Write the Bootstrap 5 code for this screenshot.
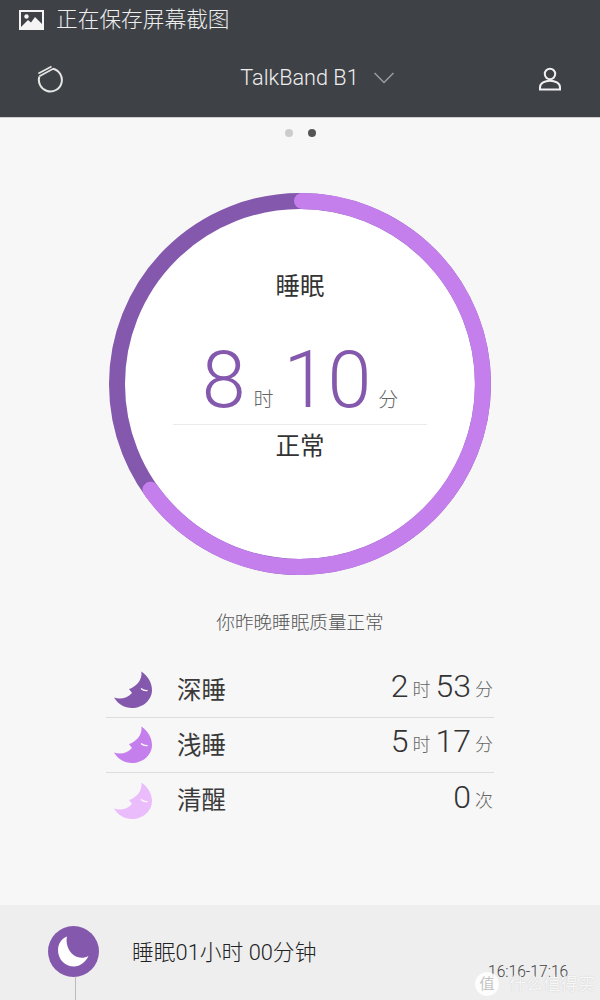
<!DOCTYPE html>
<html lang="zh-CN">
<head>
<meta charset="UTF-8">
<meta name="viewport" content="width=device-width, initial-scale=1.0">
<title>TalkBand B1</title>
<link rel="stylesheet" href="https://cdn.jsdelivr.net/npm/bootstrap@5.3.0/dist/css/bootstrap.min.css" />
<script src="https://cdn.jsdelivr.net/npm/bootstrap@5.3.0/dist/js/bootstrap.bundle.min.js"></script>
<style>
html, body { height: 1000px; overflow: hidden; }
body { font-family: Roboto, "Noto Sans CJK SC", sans-serif; background: #f7f7f7; color: #333; }
.screen { width: 600px; height: 1000px; position: relative; overflow: hidden; }
.top-head { height: 118px; background: #3e4146; border-bottom: 1px solid #cfcfcf; color: #eee; }
.status-line { height: 40px; padding-left: 19px; gap: 12px; font-size: 21.7px; font-weight: 300; }
.nav-line { height: 77px; padding: 0 36px 0 36px; }
.band-title { font-size: 21.7px; font-weight: 300; gap: 15px; margin-left: 34px; }
.pager { height: 75px; padding-top: 11px; gap: 15px; }
.pager-dot { width: 8px; height: 8px; border-radius: 50%; background: #ccc; }
.pager-dot.on { background: #555; }
.ring-box { width: 382px; height: 382px; position: relative; }
.ring-text { position: absolute; inset: 0; }
.ring-name { position: absolute; top: 78px; width: 100%; text-align: center; font-size: 24.5px; line-height: 32px; font-weight: 400; }
.ring-time { position: absolute; top: 136px; left: 64px; width: 254px; height: 96px; border-bottom: 1px solid #eaeaea; padding-bottom: 11px; }
.big-num { font-size: 79px; line-height: 66px; font-weight: 300; color: #8459ad; }
.big-unit { font-size: 20px; line-height: 26px; color: #666; font-weight: 300; margin-left: 8px; }
.big-unit.wide { margin-right: 10px; }
.big-unit.tight { margin-left: 7px; }
.ring-state { position: absolute; top: 237px; width: 100%; text-align: center; font-size: 24.5px; line-height: 34px; font-weight: 400; }
.verdict { margin-top: 34px; text-align: center; font-size: 18.6px; line-height: 28px; color: #555; font-weight: 300; }
.stage-list { width: 388px; margin: 26px auto 0; }
.stage-row { height: 55px; border-bottom: 1px solid #ddd; padding-right: 1px; }
.stage-row:last-child { border-bottom: 0; }
.stage-name { font-size: 24.5px; font-weight: 400; color: #3a3a3a; margin: 2px 0 0 24px; }
.stage-moon { margin-left: 7px; }
.stage-num { font-size: 32px; font-weight: 300; line-height: 40px; color: #333; margin-bottom: 8px; }
.stage-unit { font-size: 18px; font-weight: 300; color: #666; margin-left: 4px; line-height: 30px; }
.stage-gap { width: 5px; }
.day-foot { position: absolute; left: 0; right: 0; bottom: 0; height: 95px; background: #eee; }
.foot-line { position: absolute; left: 75px; top: 72px; width: 1px; height: 30px; background: #bbb; }
.foot-moon { position: absolute; left: 48px; top: 21px; }
.foot-text { position: absolute; left: 132px; top: 32px; font-size: 21.8px; line-height: 32px; font-weight: 300; color: #222; }
.foot-time { position: absolute; left: 488px; top: 57px; font-size: 15.6px; line-height: 20px; font-weight: 300; color: #444; }
.water-mark { position: absolute; left: 475px; top: 67px; gap: 10px; color: rgba(255,255,255,.9); font-size: 17.2px; line-height: 24px; font-weight: 400; white-space: nowrap; text-shadow: 0 0 1px #bbb; }
.water-ico { width: 24px; height: 24px; border-radius: 50%; background: rgba(255,255,255,.85); color: #c4c4c4; font-size: 15px; line-height: 24px; text-align: center; text-shadow: none; }
</style>
</head>
<body>
<div class="screen d-flex flex-column">
    <div class="top-head">
        <div class="status-line d-flex align-items-center">
            <svg width="25" height="20" viewBox="0 0 25 20"><rect x="0" y="0" width="25" height="20" fill="#f4f4f4"/><rect x="2" y="2" width="21" height="16" fill="#3e4146"/><circle cx="7.5" cy="6.5" r="2.2" fill="#f4f4f4"/><path d="M1 18 L9 10 L12 12.5 L16 7 L24 15 L24 18 Z" fill="#f4f4f4"/></svg>
            <span>正在保存屏幕截图</span>
        </div>
        <div class="nav-line d-flex align-items-center justify-content-between">
            <svg width="28" height="28" viewBox="0 0 28 28" fill="none" stroke="#e6e6e6" stroke-width="2"><path d="M17 3.8 A11.5 11.5 0 1 1 3.4 11.5"/><path stroke-width="1.7" d="M3.4 11.2 L17.2 3.8 M2.4 8.4 L15.5 1.4"/></svg>
            <div class="band-title d-flex align-items-center">
                <span>TalkBand B1</span>
                <svg width="20" height="12" viewBox="0 0 20 12" fill="none" stroke="#9a9da1" stroke-width="1.5"><path d="M0.5 1 L10 10.5 L19.5 1"/></svg>
            </div>
            <svg width="28" height="28" viewBox="0 0 28 28" fill="none" stroke="#f0f0f0" stroke-width="2"><circle cx="14" cy="9" r="5.2"/><path d="M4 24.5 V22.5 C4 18 9 15.8 14 15.8 C19 15.8 24 18 24 22.5 V24.5 Z"/></svg>
        </div>
    </div>

    <div class="pager d-flex justify-content-center">
        <span class="pager-dot"></span>
        <span class="pager-dot on"></span>
    </div>

    <div class="ring-box mx-auto">
        <svg width="382" height="382" viewBox="0 0 382 382">
            <circle cx="191" cy="191" r="190.5" fill="#ccc"/>
            <circle cx="191" cy="191" r="183" fill="#fff" stroke="#8459ad" stroke-width="16"/>
            <path d="M193 8 A183 183 0 1 1 41.5 296.7" fill="none" stroke="#c47fec" stroke-width="16" stroke-linecap="round"/>
        </svg>
        <div class="ring-text">
            <div class="ring-name">睡眠</div>
            <div class="ring-time d-flex justify-content-center align-items-end">
                <span class="big-num">8</span>
                <span class="big-unit wide">时</span>
                <span class="big-num">10</span>
                <span class="big-unit tight">分</span>
            </div>
            <div class="ring-state">正常</div>
        </div>
    </div>

    <div class="verdict">你昨晚睡眠质量正常</div>

    <div class="stage-list">
        <div class="stage-row d-flex align-items-center">
            <svg class="stage-moon" width="40" height="40" viewBox="0 0 40 40"><path d="M28.3 1.5 C35 6 39 13 39 20 C39 30 30 38 19 38 C11.5 38 5 34 1 27.5 C7 29.5 14 28.5 19 23 L16 19 C22 17.5 30 10 28.3 1.5 Z" fill="#8459ad"/><path d="M28 18.5 Q31 21 34.5 20.5" fill="none" stroke="#fff" stroke-width="1.4"/></svg>
            <span class="stage-name flex-grow-1">深睡</span>
            <span class="stage-num">2</span><span class="stage-unit">时</span><span class="stage-gap"></span>
            <span class="stage-num">53</span><span class="stage-unit">分</span>
        </div>
        <div class="stage-row d-flex align-items-center">
            <svg class="stage-moon" width="40" height="40" viewBox="0 0 40 40"><path d="M28.3 1.5 C35 6 39 13 39 20 C39 30 30 38 19 38 C11.5 38 5 34 1 27.5 C7 29.5 14 28.5 19 23 L16 19 C22 17.5 30 10 28.3 1.5 Z" fill="#c47fec"/><path d="M28 18.5 Q31 21 34.5 20.5" fill="none" stroke="#fff" stroke-width="1.4"/></svg>
            <span class="stage-name flex-grow-1">浅睡</span>
            <span class="stage-num">5</span><span class="stage-unit">时</span><span class="stage-gap"></span>
            <span class="stage-num">17</span><span class="stage-unit">分</span>
        </div>
        <div class="stage-row d-flex align-items-center">
            <svg class="stage-moon" width="40" height="40" viewBox="0 0 40 40"><path d="M28.3 1.5 C35 6 39 13 39 20 C39 30 30 38 19 38 C11.5 38 5 34 1 27.5 C7 29.5 14 28.5 19 23 L16 19 C22 17.5 30 10 28.3 1.5 Z" fill="#eabcfc"/><path d="M28 18.5 Q31 21 34.5 20.5" fill="none" stroke="#fff" stroke-width="1.4"/></svg>
            <span class="stage-name flex-grow-1">清醒</span>
            <span class="stage-num">0</span><span class="stage-unit">次</span>
        </div>
    </div>

    <div class="day-foot">
        <span class="foot-line"></span>
        <svg class="foot-moon" width="51" height="51" viewBox="0 0 51 51"><circle cx="25.5" cy="25.5" r="25.5" fill="#8459ad"/><path d="M19 10.5 C13 13 10 18 10 24 C10 33.5 17 40.5 26 40.5 C32 40.5 37.5 36 40.5 30 C36 32.5 30 32.5 25.5 29 C20 24.5 17.5 17 19 10.5 Z" fill="#fff"/></svg>
        <div class="foot-text">睡眠01小时 00分钟</div>
        <div class="foot-time">16:16-17:16</div>
        <div class="water-mark d-flex align-items-center">
            <span class="water-ico">值</span>
            <span>什么值得买</span>
        </div>
    </div>
</div>
</body>
</html>
